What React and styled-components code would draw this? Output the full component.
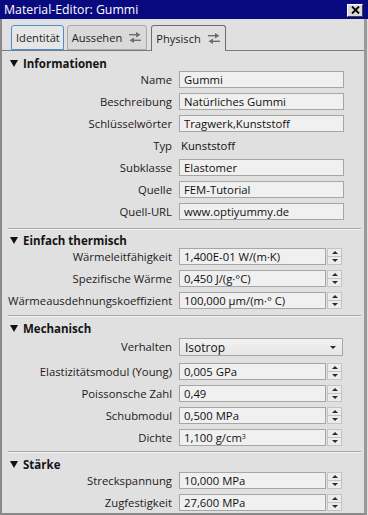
import React from "react";
import styled, { createGlobalStyle } from "styled-components";

const Global = createGlobalStyle`
  html, body { margin: 0; padding: 0; background: #e0e0e0; }
  body { font-family: "Open Sans", "Noto Sans", sans-serif; font-size: 11.3px; color: #141414; }
  * { box-sizing: border-box; }
`;

const Window = styled.div`
  width: 368px;
  height: 515px;
  display: flex;
  flex-direction: column;
  overflow: hidden;
  background: #e0e0e0;
`;

const TitleBar = styled.div`
  height: 19px;
  flex: none;
  background: #0a0a80;
  color: #ffffff;
  display: flex;
  align-items: center;
  justify-content: space-between;
  padding: 0 5px 0 4px;
  font-size: 12.3px;
`;

const CloseButton = styled.div`
  width: 16px;
  height: 13px;
  background: #d8d8d8;
  border: 1px solid;
  border-color: #ffffff #404040 #404040 #ffffff;
  display: flex;
  align-items: center;
  justify-content: center;
  margin-top: 1px;
`;

const Body = styled.div`
  flex: 1;
  display: flex;
  flex-direction: column;
  border-left: 2px solid #8a8a8a;
  border-right: 3px solid #9a9a9a;
  border-bottom: 2px solid #8a8a8a;
  margin-right: 1px;
  min-height: 0;
`;

const TabBar = styled.div`
  height: 32px;
  flex: none;
  display: flex;
  align-items: flex-end;
  gap: 3px;
  padding-left: 9px;
  border-bottom: 1px solid #7c7c7c;
`;

const Tab = styled.div`
  height: ${(p) => (p.$active ? "26px" : "25px")};
  margin-bottom: ${(p) => (p.$active ? "-1px" : "0")};
  padding: 0 ${(p) => (p.$icon ? "5px" : "3px")} 0 4px;
  display: flex;
  align-items: center;
  gap: 7px;
  font-size: 11.1px;
  color: #1c1c1c;
  background: ${(p) => (p.$active ? "#e0e0e0" : p.$focus ? "#e6e6e6" : "#d9d9d9")};
  border: 1px solid ${(p) => (p.$active ? "#6e6e6e" : p.$focus ? "#4c8fd0" : "#a9a9a9")};
  border-bottom: ${(p) => (p.$active ? "none" : undefined)};
  border-radius: 3px 3px 0 0;
  margin-left: ${(p) => (p.$active ? "1px" : "0")};
`;

const Content = styled.div`
  display: flex;
  flex-direction: column;
  padding: 5px 0 0 6px;
`;

const Section = styled.div`
  display: flex;
  flex-direction: column;
  padding-bottom: ${(p) => p.$pb ?? 4}px;
`;

const SectionHeader = styled.div`
  height: 14px;
  flex: none;
  display: flex;
  align-items: center;
  gap: 3px;
  padding-left: 2px;
  font-weight: 700;
  font-size: 11.5px;
  margin-top: ${(p) => p.$mt || 0}px;
`;

const Triangle = styled.span`
  width: 0;
  height: 0;
  border-left: 4.5px solid transparent;
  border-right: 4.5px solid transparent;
  border-top: 7px solid #111;
  margin-right: 2px;
`;

const Divider = styled.div`
  height: 1px;
  flex: none;
  background: #a9a9a9;
  margin-right: 3px;
  border-bottom: 1px solid #f4f4f4;
  box-sizing: content-box;
`;

const Row = styled.div`
  display: grid;
  grid-template-columns: 164px 1fr;
  column-gap: 7px;
  flex: none;
  height: ${(p) => p.$h || 22}px;
  align-items: start;
  padding-top: ${(p) => p.$pt ?? 1}px;
`;

const Label = styled.div`
  text-align: right;
  white-space: nowrap;
  color: #1e1a22;
  height: 17px;
  line-height: 17px;
  ${(p) => p.$h && `height: ${p.$h}px; line-height: ${p.$h}px;`}
`;

const Field = styled.div`
  height: 17px;
  width: ${(p) => p.$w || 165}px;
  background: #f0f0f0;
  border: 1px solid #a6a6a6;
  display: flex;
  align-items: center;
  padding-left: 4px;
  white-space: nowrap;
  overflow: hidden;
  color: #111;
`;

const PlainValue = styled.div`
  padding-left: 2px;
  height: 17px;
  line-height: 17px;
  color: #111;
`;

const Sup = styled.sup`
  font-size: 7px;
  line-height: 0;
  position: relative;
  top: -1px;
`;

const SpinWrap = styled.div`
  display: flex;
  gap: 1px;
  align-items: center;
`;

const Spinner = styled.div`
  width: 15px;
  height: 17px;
  display: flex;
  flex-direction: column;
  border: 1px solid #c4c4c4;
  background: #ececec;
`;

const SpinHalf = styled.div`
  flex: 1;
  display: flex;
  align-items: center;
  justify-content: center;
  border-top: ${(p) => (p.$down ? "1px solid #c4c4c4" : "none")};
`;

const Arrow = styled.span`
  width: 0;
  height: 0;
  border-left: 3px solid transparent;
  border-right: 3px solid transparent;
  ${(p) =>
    p.$down ? "border-top: 3px solid #2a2a2a;" : "border-bottom: 3px solid #2a2a2a;"}
`;

const Select = styled.div`
  width: 164px;
  height: 18px;
  border: 1px solid #a6a6a6;
  background: linear-gradient(#f2f2f2, #e6e6e6);
  display: flex;
  align-items: center;
  justify-content: space-between;
  padding: 0 6px 0 5px;
  font-size: 12px;
  color: #111;
`;

const SwapIcon = () => (
  <svg width="12" height="11" viewBox="0 0 12 11" fill="#6e6e6e">
    <rect x="0" y="2" width="8" height="1.4" />
    <polygon points="7,0 11.5,2.7 7,5.4" />
    <rect x="4" y="7.6" width="8" height="1.4" />
    <polygon points="5,5.6 0.5,8.3 5,11" />
  </svg>
);

const CloseX = () => (
  <svg width="9" height="8" viewBox="0 0 9 8">
    <path d="M1 0.5 L8 7.5 M8 0.5 L1 7.5" stroke="#000" strokeWidth="1.8" />
  </svg>
);

const Spin = () => (
  <Spinner>
    <SpinHalf>
      <Arrow />
    </SpinHalf>
    <SpinHalf $down>
      <Arrow $down />
    </SpinHalf>
  </Spinner>
);

const TextRow = ({ label, value }) => (
  <Row>
    <Label>{label}</Label>
    <Field>{value}</Field>
  </Row>
);

const SpinRow = ({ label, value }) => (
  <Row>
    <Label>{label}</Label>
    <SpinWrap>
      <Field $w={147}>{value}</Field>
      <Spin />
    </SpinWrap>
  </Row>
);

export default function App() {
  return (
    <>
      <Global />
      <Window>
        <TitleBar>
          <span>Material-Editor: Gummi</span>
          <CloseButton>
            <CloseX />
          </CloseButton>
        </TitleBar>
        <Body>
          <TabBar>
            <Tab $focus>Identität</Tab>
            <Tab $icon>
              Aussehen <SwapIcon />
            </Tab>
            <Tab $active $icon>
              Physisch <SwapIcon />
            </Tab>
          </TabBar>
          <Content>
            <Section $pb={4}>
              <SectionHeader>
                <Triangle />
                Informationen
              </SectionHeader>
              <TextRow label="Name" value="Gummi" />
              <TextRow label="Beschreibung" value="Natürliches Gummi" />
              <TextRow label="Schlüsselwörter" value="Tragwerk,Kunststoff" />
              <Row>
                <Label>Typ</Label>
                <PlainValue>Kunststoff</PlainValue>
              </Row>
              <TextRow label="Subklasse" value="Elastomer" />
              <TextRow label="Quelle" value="FEM-Tutorial" />
              <TextRow label="Quell-URL" value="www.optiyummy.de" />
            </Section>
            <Divider />
            <Section $pb={2}>
              <SectionHeader $mt={3}>
                <Triangle />
                Einfach thermisch
              </SectionHeader>
              <SpinRow label="Wärmeleitfähigkeit" value="1,400E-01 W/(m·K)" />
              <SpinRow label="Spezifische Wärme" value="0,450 J/(g·°C)" />
              <SpinRow label="Wärmeausdehnungskoeffizient" value="100,000 µm/(m·° C)" />
            </Section>
            <Divider />
            <Section $pb={1}>
              <SectionHeader $mt={4}>
                <Triangle />
                Mechanisch
              </SectionHeader>
              <Row $h={27} $pt={3}>
                <Label $h={18}>Verhalten</Label>
                <Select>
                  Isotrop
                  <Arrow $down />
                </Select>
              </Row>
              <SpinRow label="Elastizitätsmodul (Young)" value="0,005 GPa" />
              <SpinRow label="Poissonsche Zahl" value="0,49" />
              <SpinRow label="Schubmodul" value="0,500 MPa" />
              <SpinRow
                label="Dichte"
                value={
                  <>
                    1,100 g/cm<Sup>3</Sup>
                  </>
                }
              />
            </Section>
            <Divider />
            <Section>
              <SectionHeader $mt={4}>
                <Triangle />
                Stärke
              </SectionHeader>
              <SpinRow label="Streckspannung" value="10,000 MPa" />
              <SpinRow label="Zugfestigkeit" value="27,600 MPa" />
            </Section>
          </Content>
        </Body>
      </Window>
    </>
  );
}
